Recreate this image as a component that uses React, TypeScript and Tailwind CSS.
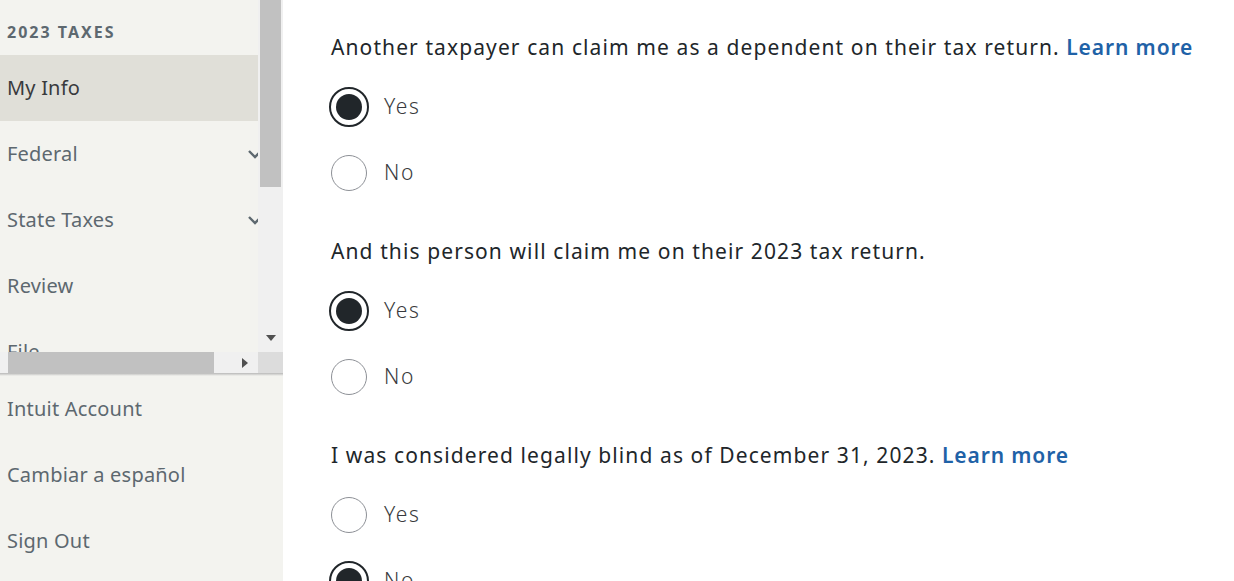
import React from "react";

const font = { fontFamily: '"Noto Sans", "Liberation Sans", sans-serif' };

const navItems = [
  { label: "My Info", active: true },
  { label: "Federal", chevron: true },
  { label: "State Taxes", chevron: true },
  { label: "Review" },
  { label: "File" },
];

const Radio = ({ label, checked }: { label: string; checked?: boolean }) => (
  <div className="h-[66px] flex items-center">
    {checked ? (
      <div className="w-[40px] h-[40px] ml-[-2px] mr-[15px] rounded-full border-2 border-[#21262a] flex items-center justify-center">
        <div className="w-[26px] h-[26px] rounded-full bg-[#21262a]" />
      </div>
    ) : (
      <div className="w-[36px] h-[36px] mr-[17px] rounded-full border border-[#8d9096] bg-white" />
    )}
    <span className="text-[21px] font-light tracking-[1.6px] text-[#393a3d]">
      {label}
    </span>
  </div>
);

const Question = ({
  text,
  learn,
  answer,
}: {
  text: string;
  learn?: boolean;
  answer: "yes" | "no";
}) => (
  <div className="pt-[31px]">
    <p className="text-[21px] leading-[28px] tracking-[1.1px] text-[#21262a] mb-[13px]">
      {text}
      {learn && (
        <span className="text-[#1f62a7] font-semibold tracking-[0.9px]">
          {" "}
          Learn more
        </span>
      )}
    </p>
    <div>
      <Radio label="Yes" checked={answer === "yes"} />
      <Radio label="No" checked={answer === "no"} />
    </div>
  </div>
);

const App = () => {
  return (
    <div
      className="flex w-[1234px] h-[581px] overflow-hidden bg-white"
      style={font}
    >
      <aside className="w-[283px] shrink-0 bg-[#f3f3ef] flex flex-col">
        <div className="flex h-[352px]">
          <nav className="w-[258px] overflow-hidden">
            <div className="h-[55px] pl-[7px] pt-[20px] text-[16px] font-bold tracking-[2px] text-[#5d686f]">
              2023 TAXES
            </div>
            {navItems.map((item) => (
              <div
                key={item.label}
                className={
                  item.active
                    ? "h-[66px] pl-[7px] flex items-center justify-between bg-[#e0dfd8] text-[20px] tracking-[0.2px] text-[#393a3d]"
                    : "h-[66px] pl-[7px] flex items-center justify-between text-[20px] tracking-[0.2px] text-[#5d686f]"
                }
              >
                <span className="whitespace-nowrap">{item.label}</span>
                {item.chevron && (
                  <svg
                    width="16"
                    height="10"
                    viewBox="0 0 16 10"
                    className="mr-[-5px] shrink-0"
                  >
                    <path
                      d="M2 2 L8 8 L14 2"
                      fill="none"
                      stroke="#5d686f"
                      strokeWidth="2.4"
                    />
                  </svg>
                )}
              </div>
            ))}
          </nav>
          <div className="w-[25px] bg-[#f0f0f0] flex flex-col pl-[2px] pr-[2px]">
            <div className="h-[187px] bg-[#c1c1c1]" />
            <div className="flex-1" />
            <div className="h-[20px] flex items-center justify-center mb-[4px]">
              <svg width="10" height="6" viewBox="0 0 10 6">
                <path d="M0 0 H10 L5 6 Z" fill="#505050" />
              </svg>
            </div>
          </div>
        </div>
        <div className="flex h-[21px]">
          <div className="w-[258px] bg-[#f0f0f0] flex items-center">
            <div className="w-[8px]" />
            <div className="w-[206px] h-full bg-[#c1c1c1]" />
            <div className="flex-1 flex items-center justify-end pr-[10px]">
              <svg width="6" height="10" viewBox="0 0 6 10">
                <path d="M0 0 V10 L6 5 Z" fill="#505050" />
              </svg>
            </div>
          </div>
          <div className="w-[25px] bg-[#dcdcdc]" />
        </div>
        <div className="h-[3px] bg-gradient-to-b from-[#b8b8b8] to-[#f3f3ef]" />
        <div className="flex flex-col">
          {["Intuit Account", "Cambiar a español", "Sign Out"].map((l) => (
            <div
              key={l}
              className="h-[66px] pl-[7px] flex items-center text-[20px] tracking-[0.2px] text-[#5d686f]"
            >
              {l}
            </div>
          ))}
        </div>
      </aside>
      <main className="flex-1 pl-[48px] pt-[2px]">
        <Question
          text="Another taxpayer can claim me as a dependent on their tax return."
          learn
          answer="yes"
        />
        <Question
          text="And this person will claim me on their 2023 tax return."
          answer="yes"
        />
        <Question
          text="I was considered legally blind as of December 31, 2023."
          learn
          answer="no"
        />
      </main>
    </div>
  );
};

export default App;
